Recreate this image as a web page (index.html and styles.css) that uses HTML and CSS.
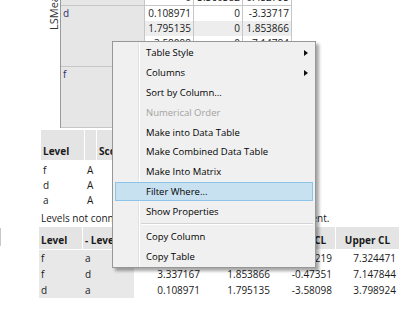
FILE: index.html
```html
<!DOCTYPE html>
<html lang="en">

<head>
    <meta charset="UTF-8">
    <title>LSMeans Report</title>
    <link rel="stylesheet" href="styles.css">
</head>

<body>

    <div class="top">
        <div class="side"><span class="side-label">LSMeans Differences Student's t</span></div>
        <div class="dtab">
            <div class="dgrp">
                <div class="gcell"></div>
                <div>
                    <div class="drow"><span class="num">0</span><span class="num">3.360382</span><span class="num">0.452795</span></div>
                </div>
            </div>
            <div class="dgrp">
                <div class="gcell">d</div>
                <div>
                    <div class="drow"><span class="num">0.108971</span><span class="num">0</span><span class="num">-3.33717</span></div>
                    <div class="drow alt"><span class="num">1.795135</span><span class="num">0</span><span class="num">1.853866</span></div>
                    <div class="drow"><span class="num">-3.58098</span><span class="num">0</span><span class="num">-7.14784</span></div>
                    <div class="drow alt"><span class="num">3.798924</span><span class="num">0</span><span class="num">0.47351</span></div>
                </div>
            </div>
            <div class="dgrp">
                <div class="gcell">f</div>
                <div>
                    <div class="drow"><span class="num">3.446138</span><span class="num">3.337167</span><span class="num">0</span></div>
                    <div class="drow alt"><span class="num">1.886815</span><span class="num">1.853866</span><span class="num">0</span></div>
                    <div class="drow"><span class="num">-0.43219</span><span class="num">-0.47351</span><span class="num">0</span></div>
                    <div class="drow alt"><span class="num">7.324471</span><span class="num">7.147844</span><span class="num">0</span></div>
                </div>
            </div>
        </div>
    </div>

    <div class="letters">
        <div class="lhead">
            <div class="w-lv">Level</div>
            <div class="w-let"></div>
            <div class="w-mean">Score Mean</div>
        </div>
        <div class="lrows">
            <div class="lrow"><span class="w-lv">f</span><span class="w-let">A</span><span class="w-mean">5.203</span></div>
            <div class="lrow"><span class="w-lv">d</span><span class="w-let">A</span><span class="w-mean">1.866</span></div>
            <div class="lrow"><span class="w-lv">a</span><span class="w-let">A</span><span class="w-mean">1.757</span></div>
        </div>
    </div>

    <p class="note">Levels not connected by same letter are significantly different.</p>

    <div class="cmp">
        <div class="stub"></div>
        <div class="ctab">
            <div class="chead">
                <div class="c1">Level</div>
                <div class="c2">- Level</div>
                <div class="c3 mid">Difference</div>
                <div class="c4 mid">Std Err Dif</div>
                <div class="c5 mid">Lower CL</div>
                <div class="c6 mid">Upper CL</div>
            </div>
            <div class="crows">
                <div class="crow"><span class="c1 lv">f</span><span class="c2 lv">a</span><span class="c3 n">3.446138</span><span class="c4 n">1.886815</span><span class="c5 n">-0.43219</span><span class="c6 n">7.324471</span></div>
                <div class="crow"><span class="c1 lv">f</span><span class="c2 lv">d</span><span class="c3 n">3.337167</span><span class="c4 n">1.853866</span><span class="c5 n">-0.47351</span><span class="c6 n">7.147844</span></div>
                <div class="crow"><span class="c1 lv">d</span><span class="c2 lv">a</span><span class="c3 n">0.108971</span><span class="c4 n">1.795135</span><span class="c5 n">-3.58098</span><span class="c6 n">3.798924</span></div>
            </div>
        </div>
    </div>

    <!-- right-click menu over the report -->
    <div class="menu">
        <div class="mi">Table Style<span class="arrow"></span></div>
        <div class="mi">Columns<span class="arrow"></span></div>
        <div class="mi">Sort by Column...</div>
        <div class="mi off">Numerical Order</div>
        <div class="mi">Make into Data Table</div>
        <div class="mi">Make Combined Data Table</div>
        <div class="mi">Make Into Matrix</div>
        <div class="mi hl">Filter Where...</div>
        <div class="mi">Show Properties</div>
        <div class="sep"></div>
        <div class="mi">Copy Column</div>
        <div class="mi">Copy Table</div>
    </div>

</body>

</html>
```

FILE: styles.css
```css
html,
body {
    margin: 0;
    overflow: hidden;
}

body {
    position: relative;
    width: 400px;
    height: 318px;
    font-family: "Open Sans", "Noto Sans", sans-serif;
    font-size: 10px;
    color: #1a1a1a;
    background: #fff;
}

/* top crosstab */
.top {
    display: flex;
    margin-top: -10px;
}

.side {
    width: 60px;
    display: flex;
    justify-content: flex-end;
}

.side-label {
    writing-mode: vertical-rl;
    transform: rotate(180deg);
    height: 40px;
    width: 13px;
    line-height: 13px;
    font-size: 11px;
    color: #333;
    white-space: nowrap;
    overflow: hidden;
}

.dtab {
    border-left: 1px solid #9a9a9a;
}

.dgrp {
    display: flex;
    border-bottom: 1px solid #c6c6c6;
}

.gcell {
    width: 84px;
    box-sizing: border-box;
    border-right: 1px solid #c6c6c6;
    background: #e6e6e6;
    padding: 0 2px;
    line-height: 15px;
    color: #2a2f6e;
}

.drow {
    display: flex;
    height: 15px;
    line-height: 15px;
}

.drow.alt {
    background: #ededed;
}

.num {
    width: 49px;
    box-sizing: border-box;
    border-right: 1px solid #c6c6c6;
    text-align: right;
    padding-right: 2px;
}

/* connecting letters */
.letters {
    margin: 2px 0 0 41px;
}

.lhead {
    display: flex;
    height: 30px;
}

.lhead div {
    box-sizing: border-box;
    background: #e4e4e4;
    border-right: 1px solid #fff;
    font-weight: bold;
    display: flex;
    align-items: flex-end;
    padding: 0 2px 2px;
    line-height: 13px;
}

.w-lv {
    width: 44px;
}

.w-let {
    width: 12px;
}

.w-mean {
    width: 120px;
}

.lrows {
    margin-top: 3px;
}

.lrow {
    display: flex;
    height: 15px;
    line-height: 15px;
}

.lrow span {
    box-sizing: border-box;
    padding-left: 2px;
}

.lrow .w-mean {
    text-align: right;
    padding-right: 4px;
}

.note {
    margin: 3px 0 0 41px;
    line-height: 14px;
    white-space: nowrap;
}

/* comparison table */
.cmp {
    display: flex;
    margin-top: 2px;
}

.stub {
    width: 2px;
    height: 18px;
    margin: 1px 38px 0 0;
    background: #f4f4f4;
    border-right: 1px solid #c8c8c8;
}

.chead {
    display: flex;
    height: 22px;
}

.chead div {
    box-sizing: border-box;
    background: #e4e4e4;
    border-right: 1px solid #fff;
    font-weight: bold;
    display: flex;
    align-items: flex-end;
    padding: 0 2px 2px;
    line-height: 13px;
    white-space: nowrap;
}

.chead .mid {
    justify-content: center;
}

.crows {
    margin-top: 1px;
}

.crow {
    display: flex;
    height: 16px;
    line-height: 16px;
}

.crow span {
    box-sizing: border-box;
}

.crow .lv {
    background: #e8e8e8;
    padding-left: 2px;
}

.crow .n {
    text-align: right;
    padding-right: 2px;
}

.c1 {
    width: 44px;
}

.c2 {
    width: 51px;
}

.c3 {
    width: 68px;
}

.c4 {
    width: 70px;
}

.c5 {
    width: 64px;
}

.c6 {
    width: 64px;
}

.crow .c5,
.crow .c6 {
    padding-right: 4px;
}

/* context menu */
.menu {
    position: absolute;
    left: 112px;
    top: 41px;
    width: 204px;
    box-sizing: border-box;
    padding: 1px 0;
    border: 1px solid #979797;
    background: linear-gradient(to right, #f0f0f0 25px, #e2e2e2 25px 26px, #fff 26px 27px, #f0f0f0 27px);
    box-shadow: 3px 3px 3px rgba(0, 0, 0, 0.35);
    font-size: 9.5px;
    color: #000;
}

.mi {
    height: 19.8px;
    margin: 0 2px;
    padding-left: 30px;
    box-sizing: border-box;
    border: 1px solid transparent;
    display: flex;
    align-items: center;
    white-space: nowrap;
}

.mi.off {
    color: #a3a3a3;
}

.mi.hl {
    background: #c7e1f0;
    border-color: #8cc4ea;
}

.arrow {
    margin-left: auto;
    margin-right: 4px;
    border-left: 4px solid #111;
    border-top: 3.5px solid transparent;
    border-bottom: 3.5px solid transparent;
}

.sep {
    height: 1px;
    margin: 1.8px 2px 1.8px 28px;
    background: #d4d4d4;
    border-bottom: 1px solid #fff;
}
```
